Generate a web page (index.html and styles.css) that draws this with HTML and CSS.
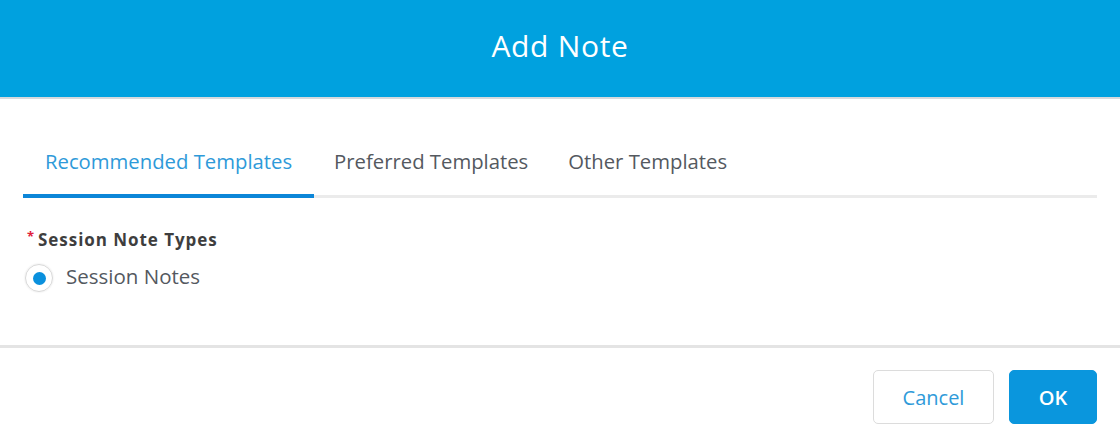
FILE: index.html
```html
<!DOCTYPE html>
<html lang="en">
<head>
<meta charset="utf-8">
<title>Add Note</title>
<link rel="stylesheet" href="styles.css">
</head>
<body>
<div class="modal">
  <header class="modal-header">
    <h1 class="modal-title">Add Note</h1>
  </header>
  <section class="modal-body">
    <nav class="tabs">
      <div class="tab tab-active">Recommended Templates</div>
      <div class="tab">Preferred Templates</div>
      <div class="tab">Other Templates</div>
    </nav>
    <div class="field">
      <div class="field-label"><span class="req">*</span>Session Note Types</div>
      <label class="radio">
        <span class="radio-ring"><span class="radio-dot"></span></span>
        <span class="radio-text">Session Notes</span>
      </label>
    </div>
  </section>
  <footer class="modal-footer">
    <button class="btn btn-neutral">Cancel</button>
    <button class="btn btn-brand">OK</button>
  </footer>
</div>
</body>
</html>
```
FILE: styles.css
```css
* { box-sizing: border-box; }
html, body { margin: 0; padding: 0; background: #fff; }
body { font-family: "Open Sans", "Liberation Sans", sans-serif; width: 1120px; height: 446px; overflow: hidden; }

.modal { display: flex; flex-direction: column; height: 446px; }

.modal-header {
  height: 99px;
  background: #00a1df;
  border-bottom: 2px solid #d6dadd;
  display: flex;
  align-items: center;
  justify-content: center;
  padding-bottom: 6px;
}
.modal-title {
  margin: 0;
  color: #fff;
  font-size: 30px;
  font-weight: 500;
  letter-spacing: 0.7px;
  line-height: 36px;
}

.modal-body {
  height: 246px;
  padding: 50px 23px 0;
}

.tabs {
  display: flex;
  border-bottom: 3px solid #ebebeb;
}
.tab {
  padding: 0 20px 21px;
  font-size: 20.3px;
  line-height: 24px;
  color: #54595f;
  margin-bottom: -3px;
  border-bottom: 4px solid transparent;
}
.tab-active {
  color: #2e9ad9;
  border-bottom-color: #0c86d8;
  padding-left: 22px;
  padding-right: 22px;
}

.field { padding-top: 31px; }
.field-label {
  font-size: 17px;
  font-weight: 700;
  line-height: 22px;
  color: #3e3e3e;
  display: flex;
  align-items: flex-start;
  padding-left: 4px;
  letter-spacing: 0.95px;
}
.req { color: #e0203a; font-size: 13px; line-height: 14px; margin-right: 3px; }

.radio {
  display: flex;
  align-items: center;
  margin-top: 13px;
  height: 28px;
}
.radio-ring {
  width: 28px;
  height: 28px;
  border-radius: 50%;
  border: 1px solid #d8d8d8;
  box-shadow: 0 0 2px rgba(0,0,0,0.12);
  display: flex;
  align-items: center;
  justify-content: center;
  margin-left: 2px;
}
.radio-dot {
  width: 13px;
  height: 13px;
  border-radius: 50%;
  background: #0a90dd;
}
.radio-text {
  margin-left: 13px;
  font-size: 20.5px;
  color: #54595f;
  line-height: 24px;
  margin-top: -4px;
}

.modal-footer {
  border-top: 3px solid #e4e4e4;
  padding: 22px 23px 22px;
  display: flex;
  justify-content: flex-end;
  gap: 15px;
}
.btn {
  height: 54px;
  border-radius: 5px;
  font-family: inherit;
  font-size: 20px;
  cursor: pointer;
}
.btn-neutral {
  width: 121px;
  background: #fff;
  border: 1px solid #dcdcdc;
  color: #2e9ad9;
}
.btn-brand {
  width: 88px;
  background: #0a96dd;
  border: 1px solid #0a96dd;
  color: #fff;
  font-weight: 600;
}
```
